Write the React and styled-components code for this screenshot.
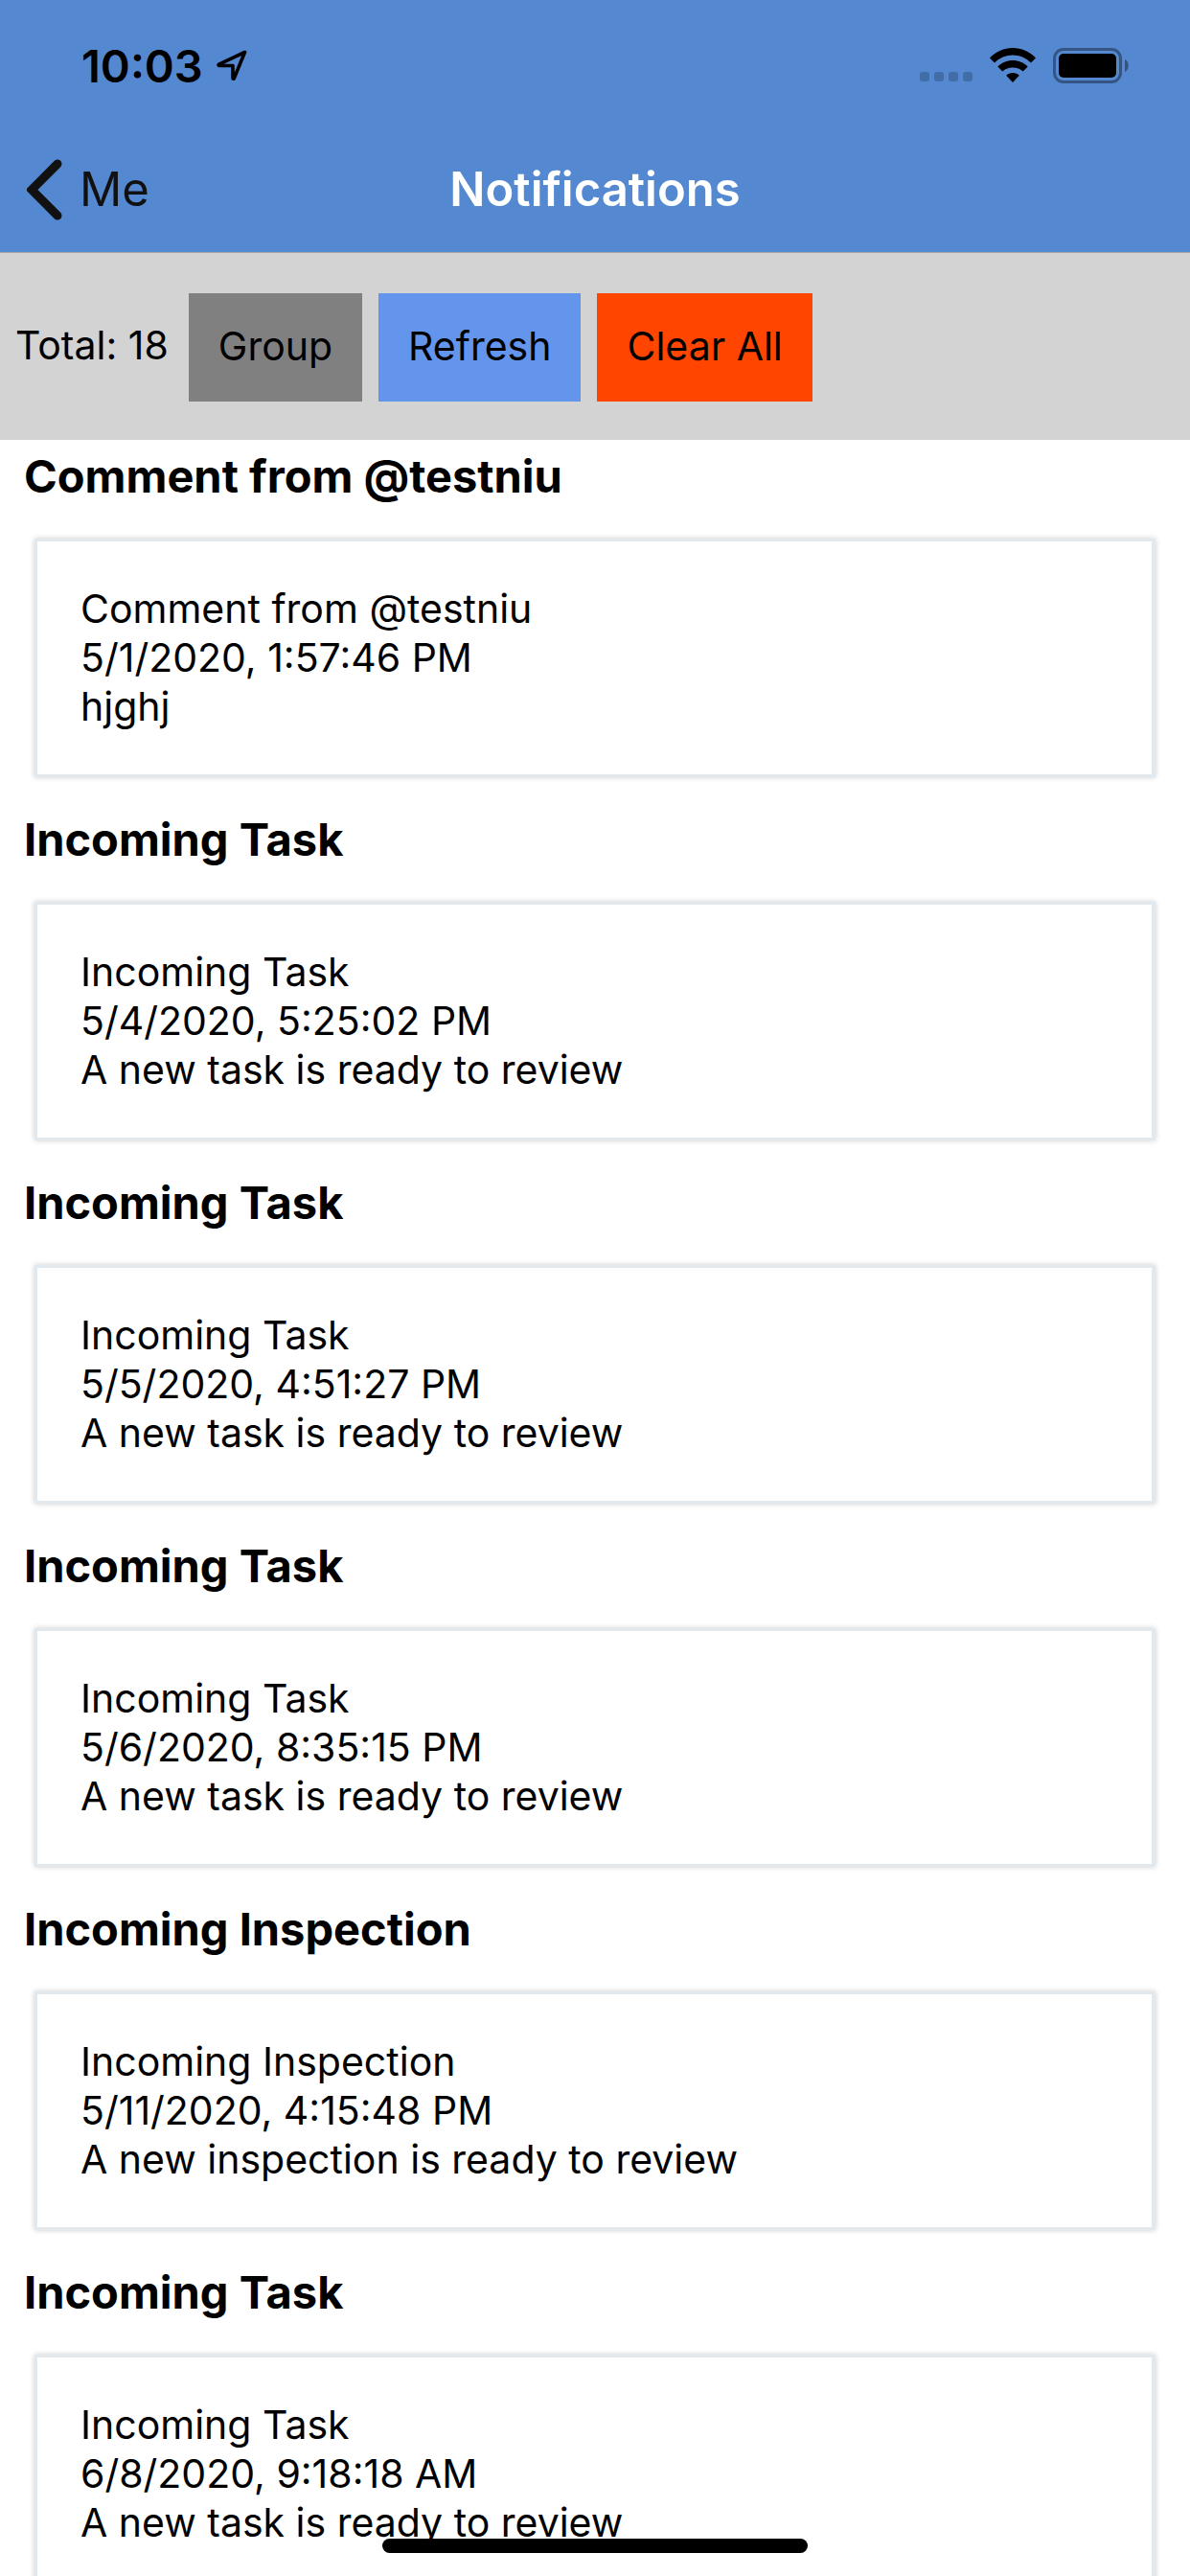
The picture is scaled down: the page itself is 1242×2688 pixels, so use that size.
import React from "react";
import styled, { createGlobalStyle } from "styled-components";

const GlobalStyle = createGlobalStyle`
  * { box-sizing: border-box; }
  body { margin: 0; background: #fff; }
`;

const Screen = styled.div`
  display: flex;
  flex-direction: column;
  height: 100vh;
  overflow: hidden;
  background: #fff;
  color: #000;
  font-family: Inter, "Liberation Sans", sans-serif;
  font-size: 41px;
  line-height: 51px;
`;

const Header = styled.header`
  flex: none;
  background: #5488d0;
  border-bottom: 1px solid #a7a7aa;
`;

const StatusBar = styled.div`
  display: flex;
  align-items: center;
  justify-content: space-between;
  height: 132px;
  padding: 4px 64px 0 85px;
`;

const StatusGroup = styled.div`
  display: flex;
  align-items: center;
  gap: ${(p) => p.$gap}px;
`;

const Clock = styled.time`
  font-size: 47px;
  font-weight: 600;
`;

const NavBar = styled.nav`
  display: grid;
  grid-template-columns: 1fr auto 1fr;
  align-items: center;
  height: 131px;
  padding: 0 28px;
`;

const BackButton = styled.button`
  display: flex;
  align-items: center;
  justify-self: start;
  gap: 18px;
  padding: 0;
  border: 0;
  background: none;
  color: #111;
  font: inherit;
  font-size: 49px;
`;

const Title = styled.h1`
  margin: 0;
  color: #fff;
  font-size: 49px;
  font-weight: 600;
`;

const Toolbar = styled.div`
  display: flex;
  flex: none;
  align-items: center;
  gap: 17px;
  padding: 42px 16px 40px;
  background: #d3d3d3;
`;

const Total = styled.span`
  padding: 0 4px 4px 0;
`;

const ActionButton = styled.button`
  padding: 30px 31px 32px;
  border: 0;
  background: ${(p) => p.$color};
  color: #000;
  font: inherit;
`;

const List = styled.main`
  flex: 1;
  min-height: 0;
  overflow-y: auto;
  scrollbar-width: none;
`;

const Section = styled.section`
  padding-bottom: 27px;
`;

const Heading = styled.h2`
  margin: 0;
  padding: 9px 25px 37px;
  font-size: 47px;
  font-weight: 700;
  line-height: 57px;
`;

const Card = styled.article`
  margin: 0 36px;
  padding: 45px;
  border: 3px solid #e1e8ee;
  border-right-width: 4px;
  background: #fff;
  box-shadow: 0 0 6px rgba(0, 0, 0, 0.2);
`;

const Line = styled.p`
  margin: 0;
`;

const HomeIndicator = styled.div`
  position: fixed;
  bottom: 24px;
  left: 50%;
  width: 444px;
  height: 15px;
  border-radius: 8px;
  background: #000;
  transform: translateX(-50%);
`;

const LocationIcon = () => (
  <svg width="32" height="32" viewBox="0 0 32 32" aria-hidden="true">
    <path
      d="M29.5 2.5 2.5 15.2c-.8.4-.5 1.3.3 1.3h14.2v13c0 .9 1 1 1.3.3Z"
      fill="none"
      stroke="#000"
      strokeWidth="3.6"
      strokeLinejoin="round"
    />
  </svg>
);

const SignalDots = () => (
  <svg width="55" height="36" viewBox="0 0 55 36" aria-hidden="true">
    {[0, 15, 30, 45].map((x) => (
      <rect key={x} x={x} y="25" width="10" height="10" rx="3" fill="#436da6" />
    ))}
  </svg>
);

const WifiIcon = () => (
  <svg width="48" height="36" viewBox="0 0 48 36" aria-hidden="true">
    <path d="M0 10.5C6.500 3.800 15 0 24 0s17.500 3.800 24 10.500l-5 5C37.800 10.500 31.200 7.600 24 7.600S10.200 10.500 5 15.500Z" />
    <path d="M8.300 19.500C12.500 15.300 18 13 24 13s11.500 2.300 15.700 6.500l-5 5.100C31.900 22 28.200 20.500 24 20.500S16.100 22 13.300 24.600Z" />
    <path d="M17.200 28.700C19 27 21.400 26 24 26s5 1 6.800 2.700L24 36Z" />
  </svg>
);

const BatteryIcon = () => (
  <svg width="79" height="37" viewBox="0 0 79 37" aria-hidden="true">
    <rect x="1.500" y="1.500" width="69" height="34" rx="9.500" fill="none" stroke="#345583" strokeWidth="3" />
    <rect x="6" y="6" width="60" height="25" rx="5" />
    <path d="M75 12c5 2 5 11 0 13Z" fill="#345583" />
  </svg>
);

const ChevronIcon = () => (
  <svg width="37" height="64" viewBox="0 0 37 64" aria-hidden="true">
    <path d="M32 5 5 32l27 27" fill="none" stroke="#111" strokeWidth="9" strokeLinecap="round" />
  </svg>
);

const actions = [
  { label: "Group", color: "#808080" },
  { label: "Refresh", color: "#6495ed" },
  { label: "Clear All", color: "#ff4500" },
];

const notifications = [
  { title: "Comment from @testniu", date: "5/1/2020, 1:57:46 PM", message: "hjghj" },
  { title: "Incoming Task", date: "5/4/2020, 5:25:02 PM", message: "A new task is ready to review" },
  { title: "Incoming Task", date: "5/5/2020, 4:51:27 PM", message: "A new task is ready to review" },
  { title: "Incoming Task", date: "5/6/2020, 8:35:15 PM", message: "A new task is ready to review" },
  { title: "Incoming Inspection", date: "5/11/2020, 4:15:48 PM", message: "A new inspection is ready to review" },
  { title: "Incoming Task", date: "6/8/2020, 9:18:18 AM", message: "A new task is ready to review" },
];

export default function App() {
  return (
    <Screen>
      <GlobalStyle />
      <Header>
        <StatusBar>
          <StatusGroup $gap={14}>
            <Clock>10:03</Clock>
            <LocationIcon />
          </StatusGroup>
          <StatusGroup $gap={18}>
            <SignalDots />
            <WifiIcon />
            <BatteryIcon />
          </StatusGroup>
        </StatusBar>
        <NavBar>
          <BackButton type="button">
            <ChevronIcon />
            Me
          </BackButton>
          <Title>Notifications</Title>
        </NavBar>
      </Header>
      <Toolbar>
        <Total>Total: 18</Total>
        {actions.map((a) => (
          <ActionButton key={a.label} type="button" $color={a.color}>
            {a.label}
          </ActionButton>
        ))}
      </Toolbar>
      <List>
        {notifications.map((n) => (
          <Section key={n.date}>
            <Heading>{n.title}</Heading>
            <Card>
              <Line>{n.title}</Line>
              <Line>{n.date}</Line>
              <Line>{n.message}</Line>
            </Card>
          </Section>
        ))}
      </List>
      <HomeIndicator />
    </Screen>
  );
}
